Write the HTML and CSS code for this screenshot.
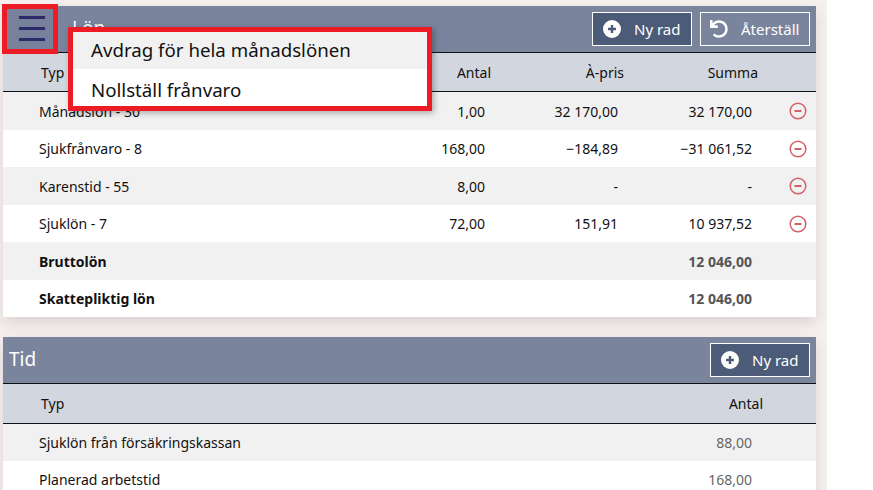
FILE: index.html
```html
<!DOCTYPE html>
<html lang="sv">
<head>
<meta charset="utf-8">
<title>Lön</title>
<link rel="stylesheet" href="styles.css">
</head>
<body>
<main class="page">
  <section class="card">
    <header class="card-head">
      <h2 class="card-title card-title-offset">Lön</h2>
      <div class="actions">
        <button class="btn btn-dark"><svg class="ico" viewBox="0 0 18 18"><circle cx="9" cy="9" r="9" fill="#fff"/><path d="M9 5v8M5 9h8" stroke="#4c5b78" stroke-width="2.4"/></svg><span>Ny rad</span></button>
        <button class="btn btn-reset"><svg class="ico" viewBox="0 0 512 512"><path fill="#fff" d="M212.333 224.333H12c-6.627 0-12-5.373-12-12V12C0 5.373 5.373 0 12 0h48c6.627 0 12 5.373 12 12v78.112C117.773 39.279 184.26 7.47 258.175 8.007c136.906.994 246.448 111.623 246.157 248.532C504.041 393.258 393.12 504 256.333 504c-64.089 0-122.496-24.313-166.51-64.215-5.099-4.622-5.334-12.554-.467-17.42l33.967-33.967c4.474-4.474 11.662-4.717 16.401-.525C170.76 415.336 211.58 432 256.333 432c97.268 0 176-78.716 176-176 0-97.267-78.716-176-176-176-58.496 0-110.28 28.476-142.274 72.333h98.274c6.627 0 12 5.373 12 12v48c0 6.627-5.373 12-12 12z"/></svg><span>Återställ</span></button>
      </div>
    </header>
    <div class="row row-head row-pay"><span class="c-type">Typ</span><span class="num">Antal</span><span class="num">À-pris</span><span class="num">Summa</span><span></span></div>
    <div class="row row-pay"><span class="c-name">Månadslön - 30</span><span class="num">1,00</span><span class="num">32 170,00</span><span class="num">32 170,00</span><svg class="minus" viewBox="0 0 18 18"><circle cx="9" cy="9" r="7.8"/><path d="M5.5 9h7"/></svg></div>
    <div class="row row-pay"><span class="c-name">Sjukfrånvaro - 8</span><span class="num">168,00</span><span class="num">−184,89</span><span class="num">−31 061,52</span><svg class="minus" viewBox="0 0 18 18"><circle cx="9" cy="9" r="7.8"/><path d="M5.5 9h7"/></svg></div>
    <div class="row row-pay"><span class="c-name">Karenstid - 55</span><span class="num">8,00</span><span class="num">-</span><span class="num">-</span><svg class="minus" viewBox="0 0 18 18"><circle cx="9" cy="9" r="7.8"/><path d="M5.5 9h7"/></svg></div>
    <div class="row row-pay"><span class="c-name">Sjuklön - 7</span><span class="num">72,00</span><span class="num">151,91</span><span class="num">10 937,52</span><svg class="minus" viewBox="0 0 18 18"><circle cx="9" cy="9" r="7.8"/><path d="M5.5 9h7"/></svg></div>
    <div class="row row-pay row-total"><span class="c-name">Bruttolön</span><span></span><span></span><span class="num">12 046,00</span><span></span></div>
    <div class="row row-pay row-total"><span class="c-name">Skattepliktig lön</span><span></span><span></span><span class="num">12 046,00</span><span></span></div>
  </section>
  <section class="card">
    <header class="card-head">
      <h2 class="card-title">Tid</h2>
      <div class="actions">
        <button class="btn btn-dark"><svg class="ico" viewBox="0 0 18 18"><circle cx="9" cy="9" r="9" fill="#fff"/><path d="M9 5v8M5 9h8" stroke="#4c5b78" stroke-width="2.4"/></svg><span>Ny rad</span></button>
      </div>
    </header>
    <div class="row row-head row-time"><span class="c-type">Typ</span><span class="num">Antal</span></div>
    <div class="row row-time row-muted"><span class="c-name">Sjuklön från försäkringskassan</span><span class="num">88,00</span></div>
    <div class="row row-time row-muted"><span class="c-name">Planerad arbetstid</span><span class="num">168,00</span></div>
  </section>
</main>
<button class="burger" aria-label="Meny"><span></span><span></span><span></span></button>
<ul class="menu">
  <li class="menu-item menu-item-active">Avdrag för hela månadslönen</li>
  <li class="menu-item menu-item-low">Nollställ frånvaro</li>
</ul>
</body>
</html>
```
FILE: styles.css
```css
* { box-sizing: border-box; }
html, body { margin: 0; height: 490px; overflow: hidden; background: #fff; }
body { font-family: "Noto Sans", "Open Sans", sans-serif; font-size: 14px; color: #111; position: relative; }
.page { width: 827px; height: 490px; padding: 6px 11px 0 3px; background: #f6f1f0; display: flex; flex-direction: column; gap: 20px; }
.card { background: #fff; box-shadow: 0 6px 14px rgba(120, 100, 95, .22); }
.card-head { height: 47px; background: #7a849c; border-bottom: 1px solid #111; display: flex; align-items: center; justify-content: space-between; padding: 0 6px; }
.card-title { margin: 0 0 3px; font-size: 19px; font-weight: 400; color: #fff; }
.card-title-offset { margin-left: 63px; }
.actions { display: flex; gap: 8px; }
.btn { height: 34px; padding: 0 10px; display: flex; align-items: center; gap: 13px; font: inherit; font-size: 15px; color: #fff; background: transparent; border: 1px solid #fff; border-radius: 0; }
.btn-dark { background: #4c5b78; width: 100px; }
.btn-reset { width: 110px; padding-left: 9px; }
.ico { width: 18px; height: 18px; flex: none; }
.row { display: grid; align-items: center; height: 37px; background: #fff; }
.row:nth-of-type(even) { background: #f2f1f1; height: 38px; }
.row-pay { grid-template-columns: 36px 1fr 92px 133px 134px 64px; }
.row-time { grid-template-columns: 36px 1fr 93px 64px; }
.row > .c-type, .row > .c-name { grid-column: 2; }
.row-head { height: 39px; background: #d2d6de !important; border-bottom: 1px solid #111; }
.row-time.row-head { height: 40px; }
.row-muted:nth-of-type(even) { height: 37px; }
.num { text-align: right; }
.row-pay.row-head .num { margin-right: -6px; }
.row-time.row-head .num { margin-right: -11px; }
.c-type { padding-left: 2px; }
.row-total { font-weight: 700; }
.row-total .num { color: #555; }
.row-muted .num { color: #666; }
.minus { width: 18px; height: 18px; justify-self: end; margin-right: 9px; fill: none; stroke: #d4606a; stroke-width: 1.5; }
.minus path { stroke-width: 2; }
.burger { position: absolute; left: 2px; top: 4px; width: 56px; height: 50px; padding: 7px 8px 8px 12px; display: flex; flex-direction: column; justify-content: space-between; background: #78819b; border: 5px solid #ed1c24; }
.burger span { display: block; height: 3px; background: #2c2a6b; }
.menu { position: absolute; left: 68px; top: 27px; width: 364px; margin: 0; padding: 0; list-style: none; background: #fff; border: 5px solid #ed1c24; box-shadow: 2px 2px 6px rgba(0, 0, 0, .3); font-size: 18.7px; }
.menu-item { height: 37px; line-height: 36px; padding-left: 18px; }
.menu-item-low { line-height: 42px; }
.menu-item-active { background: #f2f1f1; }
```
